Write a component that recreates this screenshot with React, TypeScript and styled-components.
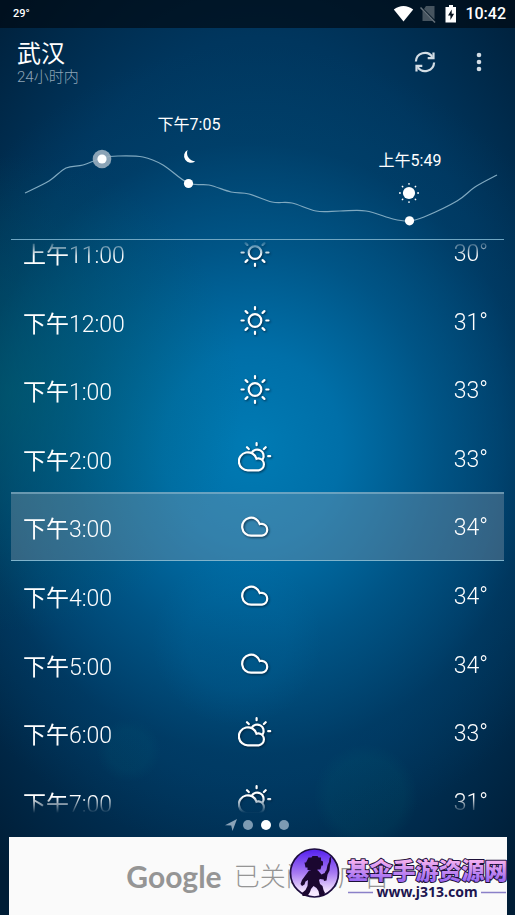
import React from "react";
import styled, { createGlobalStyle, css } from "styled-components";

const GlobalStyle = createGlobalStyle`
  *, *::before, *::after { box-sizing: border-box; }
  body { margin: 0; background: #001a33; }
  button { appearance: none; border: 0; padding: 0; background: none; color: inherit; font: inherit; cursor: pointer; }
`;

const Screen = styled.div`
  display: flex;
  flex-direction: column;
  min-height: 100vh;
  color: #fff;
  font-family: Roboto, "Noto Sans CJK SC", sans-serif;
  background:
    radial-gradient(circle at 25% 82%, rgba(0, 110, 130, 0.1) 0 20px, transparent 32px),
    radial-gradient(circle at 71% 87%, rgba(0, 110, 120, 0.11) 0 38px, transparent 52px),
    radial-gradient(circle at 46% 70%, rgba(0, 120, 180, 0.12) 0 50px, transparent 85px),
    radial-gradient(ellipse 45% 26% at 2% 43%, rgba(0, 100, 110, 0.5), transparent),
    radial-gradient(ellipse 72% 44% at 49% 49%, #007bb4 0%, #006fa8 24%, rgba(0, 92, 144, 0.75) 50%, rgba(0, 68, 112, 0.35) 76%, transparent 100%),
    radial-gradient(ellipse 76% 66% at 50% 45%, #004c79 0%, #00365e 62%, #001d36 100%);
`;

const StatusBar = styled.div`
  display: flex;
  align-items: center;
  justify-content: space-between;
  height: 28px;
  padding: 0 9px 0 13px;
  background: rgba(0, 8, 16, 0.65);
`;

const StatusTemp = styled.span`
  font: 500 11px/16px "Liberation Sans Narrow", Roboto, sans-serif;
`;

const StatusIcons = styled.div`
  display: flex;
  align-items: center;
  font-weight: 500;
  font-size: 16px;
  line-height: 20px;
  svg { display: block; }
`;

const Clock = styled.time`
  margin-left: 8px;
`;

const Header = styled.header`
  display: flex;
  justify-content: space-between;
  height: 62px;
  padding: 12px 18px 0 17px;
`;

const City = styled.h1`
  margin: 0;
  font-size: 24px;
  font-weight: 400;
  line-height: 28px;
`;

const Period = styled.p`
  margin: 0;
  font-size: 15px;
  font-weight: 300;
  line-height: 18px;
  color: #8ea5b7;
`;

const Actions = styled.div`
  display: flex;
  gap: 18px;
`;

const IconButton = styled.button`
  display: grid;
  place-items: center;
  width: 36px;
  height: 44px;
`;

const Chart = styled.svg`
  display: block;
  width: 100%;
  height: auto;
  overflow: visible;
  text {
    fill: #fff;
    font-size: 16px;
    text-anchor: middle;
  }
`;

const ListFrame = styled.main`
  display: flex;
  flex: 1;
  margin: 0 11px;
  border-top: 1px solid #6fa6c2;
  overflow: hidden;
`;

const FadeMask = styled.div`
  display: flex;
  flex: 1;
  overflow: hidden;
  mask-image: linear-gradient(transparent, #000 16px, #000 calc(100% - 16px), transparent);
`;

const HourList = styled.ol`
  display: grid;
  flex: 1;
  grid-auto-rows: minmax(60px, 1fr);
  margin: -22px 0;
  padding: 0;
  list-style: none;
`;

const HourRow = styled.li<{ $current?: boolean }>`
  display: grid;
  grid-template-columns: 1fr 36px 1fr;
  align-items: center;
  padding: 0 16px 0 12px;
  border: solid transparent;
  border-width: 2px 0 1px;
  font-size: 23px;
  font-weight: 300;
  line-height: 32px;
  ${(p) =>
    p.$current &&
    css`
      background: rgba(150, 165, 178, 0.34);
      border-color: rgba(150, 190, 210, 0.55) transparent #7fb3cb;
    `}
`;

const Hour = styled.time`
  padding-top: 7px;
`;

const Meridiem = styled.span`
  font-weight: 400;
`;

const Degrees = styled.span`
  padding-top: 3px;
  text-align: right;
`;

const WeatherSvg = styled.svg`
  display: block;
  fill: none;
  stroke: #fff;
  stroke-width: 2.2;
  stroke-linecap: round;
  filter: drop-shadow(1px 1px 1px rgba(0, 20, 40, 0.7));
`;

const Pager = styled.nav`
  display: flex;
  align-items: center;
  justify-content: center;
  gap: 8px;
  height: 24px;
  padding-right: 2px;
`;

const Dot = styled.button<{ $active?: boolean }>`
  width: 10px;
  height: 10px;
  border-radius: 50%;
  background: ${(p) => (p.$active ? "#fff" : "#7d9bb3")};
`;

const PagerArrow = styled.button`
  display: block;
  width: 10px;
  height: 12px;
  svg { display: block; }
`;

const AdBanner = styled.aside`
  position: relative;
  display: flex;
  align-items: center;
  justify-content: center;
  gap: 12px;
  height: 78px;
  margin: 0 8px 0 9px;
  background: #fafafa;
  color: #959595;
`;

const AdBrand = styled.span`
  font: 700 30px/40px Lato, sans-serif;
`;

const AdText = styled.span`
  padding-top: 2px;
  font-size: 26px;
  font-weight: 300;
  line-height: 40px;
`;

const SiteMark = styled.a`
  position: absolute;
  right: 0;
  top: 8px;
  svg { display: block; overflow: visible; }
`;

type Kind = "sun" | "partly" | "cloud";

const CLOUD = "M14.5 26.7H25A6 6 0 0 0 25 14.8Q23.8 14.7 22.8 15.1A9 9 0 1 0 14.5 26.7Z";

function WeatherIcon({ kind }: { kind: Kind }) {
  const labels = { sun: "晴", partly: "多云", cloud: "阴" };
  return (
    <WeatherSvg width="36" height="36" viewBox="0 0 36 36" role="img" aria-label={labels[kind]}>
      {kind === "sun" && (
        <>
          <circle cx="17" cy="17.5" r="6.3" />
          <path d="M17 4v2.2M17 28.8v2.2M3.5 17.5h2.2M28.3 17.5h2.2M7.6 8.1l1.8 1.8M24.6 25.1l1.8 1.8M26.4 8.1l-1.8 1.8M9.4 25.1l-1.8 1.8" />
        </>
      )}
      {kind === "cloud" && <path d={CLOUD} transform="translate(-1 0)" />}
      {kind === "partly" && (
        <g transform="translate(-1 -1)">
          <path d={CLOUD} transform="translate(-3.3 4.6)" />
          <path d="M14.7 13.8A6.2 6.2 0 0 1 25.8 20" />
          <path d="M19.6 4.2v2M10 8.2l1.8 1.8M28.7 8.2l-1.8 1.8M31.2 17.2h2" />
        </g>
      )}
    </WeatherSvg>
  );
}

const hours: { half: string; time: string; kind: Kind; temp: number; current?: boolean }[] = [
  { half: "上午", time: "11:00", kind: "sun", temp: 30 },
  { half: "下午", time: "12:00", kind: "sun", temp: 31 },
  { half: "下午", time: "1:00", kind: "sun", temp: 33 },
  { half: "下午", time: "2:00", kind: "partly", temp: 33 },
  { half: "下午", time: "3:00", kind: "cloud", temp: 34, current: true },
  { half: "下午", time: "4:00", kind: "cloud", temp: 34 },
  { half: "下午", time: "5:00", kind: "cloud", temp: 34 },
  { half: "下午", time: "6:00", kind: "partly", temp: 33 },
  { half: "下午", time: "7:00", kind: "partly", temp: 31 },
];

const curve: [number, number][] = [
  [25, 103], [49, 91], [66, 78], [83, 75], [102, 68], [118, 66], [143, 67], [163, 75],
  [188, 93], [209, 95], [231, 102], [249, 104], [272, 112], [292, 113], [316, 121],
  [340, 121], [366, 121], [393, 129], [409, 131], [424, 127], [457, 111], [475, 97], [497, 85],
];

function smoothPath(points: [number, number][]) {
  return points.slice(1).reduce((d, p, i) => {
    const a = points[Math.max(i - 1, 0)];
    const b = points[i];
    const n = points[Math.min(i + 2, points.length - 1)];
    return `${d}C${b[0] + (p[0] - a[0]) / 6} ${b[1] + (p[1] - a[1]) / 6} ${p[0] - (n[0] - b[0]) / 6} ${p[1] - (n[1] - b[1]) / 6} ${p[0]} ${p[1]}`;
  }, `M${points[0][0]} ${points[0][1]}`);
}

function TemperatureChart() {
  return (
    <Chart viewBox="0 0 515 149" role="img" aria-label="24小时温度">
      <path d={smoothPath(curve)} fill="none" stroke="#7fa9c0" strokeWidth="1.2" />
      <circle cx="102" cy="69" r="9.3" fill="#9aafbf" fillOpacity="0.9" />
      <circle cx="102" cy="69" r="4.6" fill="#fff" />
      <text x="189" y="40">下午7:05</text>
      <path d="M187.6 60A6.8 6.8 0 1 0 195.2 71.2A8.2 8.2 0 0 1 187.6 60Z" fill="#fff" />
      <circle cx="188.5" cy="93.5" r="4.6" fill="#fff" />
      <text x="410" y="76">上午5:49</text>
      <circle cx="409" cy="103" r="6.1" fill="#fff" />
      <path
        d="M409 93v1.8M409 111.2v1.8M399 103h1.8M417.2 103h1.8M401.9 95.9l1.3 1.3M414.8 108.8l1.3 1.3M416.1 95.9l-1.3 1.3M403.2 108.8l-1.3 1.3"
        stroke="#fff"
        strokeWidth="1.3"
      />
      <circle cx="409.5" cy="130.8" r="4.6" fill="#fff" />
    </Chart>
  );
}

function SiteLogo() {
  return (
    <svg width="218" height="54" viewBox="0 0 218 54">
      <defs>
        <linearGradient id="disc" x1="0" y1="0" x2="0" y2="1">
          <stop offset="0.05" stopColor="#5b27ee" />
          <stop offset="0.5" stopColor="#a779f2" />
          <stop offset="0.9" stopColor="#f7e9ff" />
        </linearGradient>
        <linearGradient id="name" x1="0" y1="0" x2="0" y2="1">
          <stop offset="0.25" stopColor="#f5b0f0" />
          <stop offset="0.85" stopColor="#9a68f2" />
        </linearGradient>
      </defs>
      <circle cx="25.5" cy="28" r="24" fill="url(#disc)" stroke="#1d0d3f" strokeWidth="1.7" />
      <g fill="#1b0730">
        <path d="M19.5 12.5h3l1-1.5h5l1 1.5h2.5v3l2 1v4h-1.5l-1 4h-3v2h-7v-1.5h-3v-2.5h-2l-1-5h1.5z" />
        <path d="M20 25.5h9l3.5 4 3-1.5 2.5 3-3.5 3.500-3.500-.5-1 1 1 4 2.500 2 1 4 1.500 3-1.500 3h-4l-1-5-2-3-3-2-2.500 3-1 3-2.500 4h-5l-.5-3 3.500-3 2-4 .5-6-2.500 1.500-1 3-2.500 1.500-1.500-2 1.500-4z" />
        <path d="M35 36l-.5-2 1.5-7 1.5-2 1-5 1.5-3 .5-4 1.5-1.5v5l-1 4-.5 5-2 4-1 6z" />
      </g>
      <text
        x="138"
        y="34"
        textAnchor="middle"
        fontFamily="'Noto Sans CJK SC', sans-serif"
        fontWeight="900"
        fontSize="23"
        fill="url(#name)"
        stroke="#1d1038"
        strokeWidth="2"
        strokeLinejoin="round"
        paintOrder="stroke"
      >
        基伞手游资源网
      </text>
      <path d="M59 47.5h25M192 47.5h25" stroke="#8a80c8" strokeWidth="1.5" />
      <text x="138" y="52" textAnchor="middle" fontFamily="'Noto Sans', sans-serif" fontWeight="700" fontSize="14" fill="#1d1550">
        www.j313.com
      </text>
    </svg>
  );
}

export default function App() {
  return (
    <Screen>
      <GlobalStyle />
      <StatusBar>
        <StatusTemp>29°</StatusTemp>
        <StatusIcons>
          <svg width="64" height="20" viewBox="0 0 64 20" aria-hidden="true">
            <path d="M.8 5.6C6.5.9 14.5.9 20.2 5.6L10.5 17.6Z" fill="#fff" />
            <path d="M33 2h8.500v13.500L31 5z" fill="#46545f" />
            <path d="M29.5 6.5L40 17H29.500z" fill="#46545f" />
            <path d="M27.5 3.5l14.5 15" stroke="#66717a" strokeWidth="1.5" />
            <path d="M56 1h4v2h3v15.5H52.5V3H56z" fill="#fff" />
            <path d="M58.7 5.5l-3.7 6h2.4v4.5l3.7-6.2h-2.4z" fill="#07131f" />
          </svg>
          <Clock>10:42</Clock>
        </StatusIcons>
      </StatusBar>
      <Header>
        <div>
          <City>武汉</City>
          <Period>24小时内</Period>
        </div>
        <Actions>
          <IconButton aria-label="刷新">
            <svg width="22" height="22" viewBox="0 0 22 22" fill="none" stroke="#d3dde5" strokeWidth="2.2">
              <path d="M1.9 10.5A9 9 0 0 1 18.3 5.8" />
              <path d="M20.1 11.5A9 9 0 0 1 3.7 16.2" />
              <path d="M19.5 1.5v5.7h-5.8" />
              <path d="M2.5 20.5v-5.7h5.8" />
            </svg>
          </IconButton>
          <IconButton aria-label="更多">
            <svg width="6" height="20" viewBox="0 0 6 20" fill="#d3dde5">
              <circle cx="3" cy="3" r="2.3" />
              <circle cx="3" cy="10" r="2.3" />
              <circle cx="3" cy="17" r="2.3" />
            </svg>
          </IconButton>
        </Actions>
      </Header>
      <TemperatureChart />
      <ListFrame>
        <FadeMask>
          <HourList>
            {hours.map((h) => (
              <HourRow key={h.half + h.time} $current={h.current}>
                <Hour>
                  <Meridiem>{h.half}</Meridiem>
                  {h.time}
                </Hour>
                <WeatherIcon kind={h.kind} />
                <Degrees>{h.temp}°</Degrees>
              </HourRow>
            ))}
          </HourList>
        </FadeMask>
      </ListFrame>
      <Pager aria-label="页面">
        <PagerArrow aria-label="当前位置">
          <svg width="12" height="12" viewBox="0 0 12 12" fill="#8aa3b8">
            <path d="M12 0L7.5 12 6.2 6.6 0 6.2Z" />
          </svg>
        </PagerArrow>
        <Dot aria-label="第1页" />
        <Dot $active aria-label="第2页" />
        <Dot aria-label="第3页" />
      </Pager>
      <AdBanner>
        <AdBrand>Google</AdBrand>
        <AdText>已关闭此广告</AdText>
        <SiteMark href="#">
          <SiteLogo />
        </SiteMark>
      </AdBanner>
    </Screen>
  );
}
